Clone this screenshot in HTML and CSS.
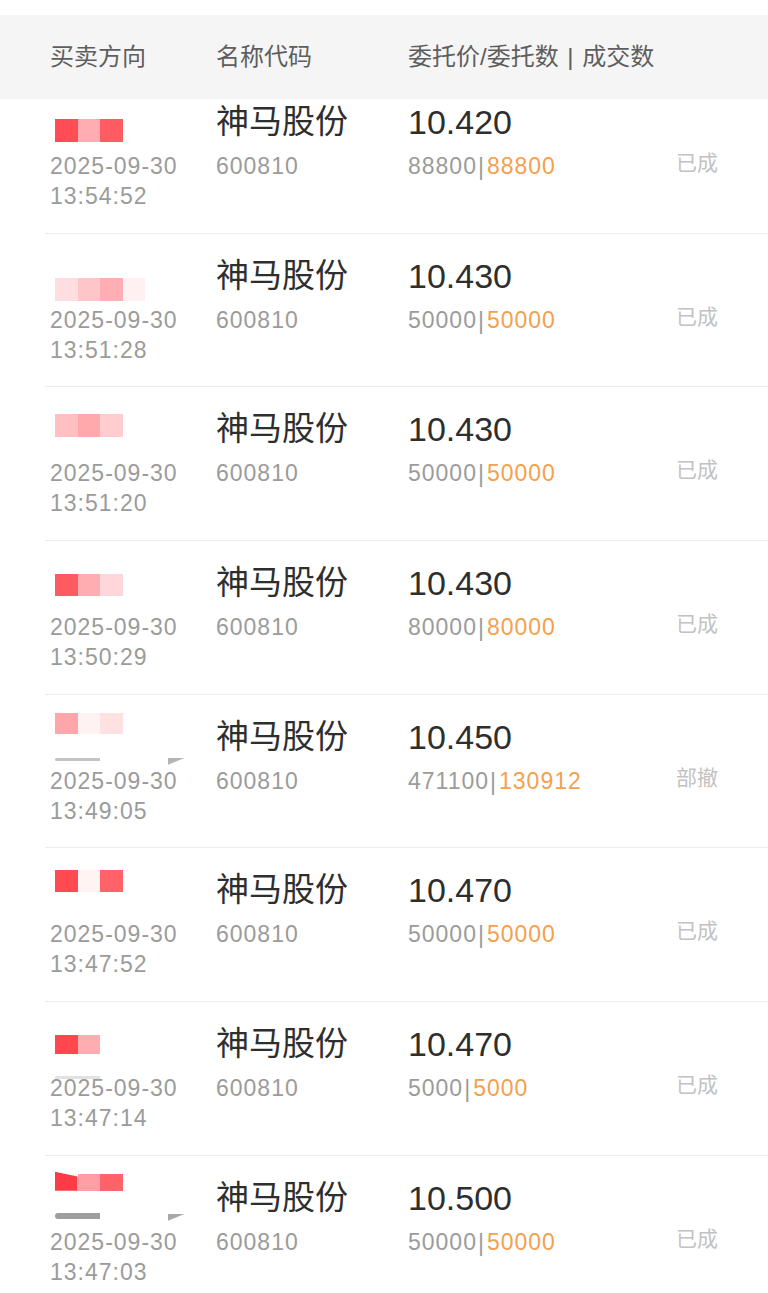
FILE: index.html
```html
<!DOCTYPE html>
<html lang="zh-CN">
<head>
<meta charset="utf-8">
<title>委托记录</title>
<link rel="stylesheet" href="styles.css">
</head>
<body>
<div class="page">
  <div class="topgap"></div>
  <div class="header">
    <div class="h c1">买卖方向</div>
    <div class="h c2">名称代码</div>
    <div class="h c3">委托价/委托数 | 成交数</div>
  </div>
  <div class="list">
    <div class="inner">

      <div class="row first">
        <div class="col1">
          <div class="mosaic m1"><i class="r1"></i><i class="r2"></i><i class="r3"></i></div>
          <div class="date">2025-09-30</div>
          <div class="time">13:54:52</div>
        </div>
        <div class="col2"><div class="name">神马股份</div><div class="code">600810</div></div>
        <div class="col3"><div class="price">10.420</div><div class="qty"><span class="q">88800</span><span class="bar">|</span><span class="d">88800</span></div></div>
        <div class="col4">已成</div>
      </div>

      <div class="row">
        <div class="col1">
          <div class="mosaic m2"><i class="p1"></i><i class="p2"></i><i class="p3"></i><i class="p4"></i></div>
          <div class="date">2025-09-30</div>
          <div class="time">13:51:28</div>
        </div>
        <div class="col2"><div class="name">神马股份</div><div class="code">600810</div></div>
        <div class="col3"><div class="price">10.430</div><div class="qty"><span class="q">50000</span><span class="bar">|</span><span class="d">50000</span></div></div>
        <div class="col4">已成</div>
      </div>

      <div class="row">
        <div class="col1">
          <div class="mosaic m3"><i class="s1"></i><i class="s2"></i><i class="s3"></i></div>
          <div class="date">2025-09-30</div>
          <div class="time">13:51:20</div>
        </div>
        <div class="col2"><div class="name">神马股份</div><div class="code">600810</div></div>
        <div class="col3"><div class="price">10.430</div><div class="qty"><span class="q">50000</span><span class="bar">|</span><span class="d">50000</span></div></div>
        <div class="col4">已成</div>
      </div>

      <div class="row">
        <div class="col1">
          <div class="mosaic m4"><i class="t1"></i><i class="t2"></i><i class="t3"></i></div>
          <div class="date">2025-09-30</div>
          <div class="time">13:50:29</div>
        </div>
        <div class="col2"><div class="name">神马股份</div><div class="code">600810</div></div>
        <div class="col3"><div class="price">10.430</div><div class="qty"><span class="q">80000</span><span class="bar">|</span><span class="d">80000</span></div></div>
        <div class="col4">已成</div>
      </div>

      <div class="row">
        <div class="col1">
          <div class="mosaic m5"><i class="u1"></i><i class="u2"></i><i class="u3"></i></div>
          <div class="smear s5a"></div>
          <div class="wedge w5"></div>
          <div class="date">2025-09-30</div>
          <div class="time">13:49:05</div>
        </div>
        <div class="col2"><div class="name">神马股份</div><div class="code">600810</div></div>
        <div class="col3"><div class="price">10.450</div><div class="qty"><span class="q">471100</span><span class="bar">|</span><span class="d">130912</span></div></div>
        <div class="col4">部撤</div>
      </div>

      <div class="row">
        <div class="col1">
          <div class="mosaic m6"><i class="v1"></i><i class="v2"></i><i class="v3"></i></div>
          <div class="date">2025-09-30</div>
          <div class="time">13:47:52</div>
        </div>
        <div class="col2"><div class="name">神马股份</div><div class="code">600810</div></div>
        <div class="col3"><div class="price">10.470</div><div class="qty"><span class="q">50000</span><span class="bar">|</span><span class="d">50000</span></div></div>
        <div class="col4">已成</div>
      </div>

      <div class="row">
        <div class="col1">
          <div class="mosaic m7"><i class="x1"></i><i class="x2"></i></div>
          <div class="smear s7a"></div>
          <div class="date">2025-09-30</div>
          <div class="time">13:47:14</div>
        </div>
        <div class="col2"><div class="name">神马股份</div><div class="code">600810</div></div>
        <div class="col3"><div class="price">10.470</div><div class="qty"><span class="q">5000</span><span class="bar">|</span><span class="d">5000</span></div></div>
        <div class="col4">已成</div>
      </div>

      <div class="row last">
        <div class="col1">
          <div class="mosaic m8"><i class="y1"></i><i class="y2"></i><i class="y3"></i></div>
          <div class="smear s8a"></div>
          <div class="wedge w8"></div>
          <div class="date">2025-09-30</div>
          <div class="time">13:47:03</div>
        </div>
        <div class="col2"><div class="name">神马股份</div><div class="code">600810</div></div>
        <div class="col3"><div class="price">10.500</div><div class="qty"><span class="q">50000</span><span class="bar">|</span><span class="d">50000</span></div></div>
        <div class="col4">已成</div>
      </div>

    </div>
  </div>
</div>
</body>
</html>
```
FILE: styles.css
```css
html, body {
  margin: 0;
  padding: 0;
  background: #ffffff;
}
body {
  font-family: "Liberation Sans", "Noto Sans CJK SC", sans-serif;
  width: 768px;
  height: 1293px;
  overflow: hidden;
}
.page {
  display: flex;
  flex-direction: column;
  height: 1293px;
}
.topgap {
  height: 15px;
  background: #ffffff;
  flex: none;
}
.header {
  flex: none;
  height: 84px;
  background: #f5f5f5;
  display: grid;
  grid-template-columns: 166px 192px 1fr;
  align-items: center;
  padding-left: 50px;
  color: #5e5e5e;
  font-size: 24px;
}
.h {
  line-height: 32px;
  white-space: nowrap;
}
.c3 {
  word-spacing: 2px;
}
.list {
  flex: 1;
  overflow: hidden;
  position: relative;
}
.inner {
  margin-top: -20px;
}
.row {
  margin-left: 45px;
  padding-left: 5px;
  height: 153.7px;
  box-sizing: border-box;
  border-top: 1px solid #ececec;
  display: grid;
  grid-template-columns: 166px 192px 268px 1fr;
}
.row.first {
  border-top: 1px solid transparent;
}
.col1 {
  position: relative;
  padding-top: 71px;
}
.date, .time, .code, .qty {
  font-size: 23px;
  line-height: 30px;
  letter-spacing: 1px;
  color: #9b9b9b;
  white-space: nowrap;
}
.col2, .col3 {
  padding-top: 20px;
}
.name {
  font-size: 33px;
  line-height: 44px;
  color: #2e2e2e;
  margin-bottom: 7px;
  white-space: nowrap;
}
.price {
  font-size: 34px;
  line-height: 44px;
  color: #2e2e2e;
  margin-bottom: 7px;
  white-space: nowrap;
}
.qty .bar {
  color: #9b9b9b;
  margin: 0 3px 0 1px;
  letter-spacing: 0;
  position: relative;
  top: 1px;
}
.qty .d {
  color: #f5a04c;
}
.col4 {
  padding-top: 68px;
  font-size: 21px;
  line-height: 30px;
  color: #c2c2c2;
  white-space: nowrap;
}

/* censored mosaic blocks that cover the direction label */
.mosaic {
  position: absolute;
  left: 5px;
  display: flex;
  height: 23px;
}
.mosaic i {
  display: block;
  width: 22.5px;
  height: 100%;
}
.m1 { top: 39px; }
.m1 .r1 { background: #ff4c55; }
.m1 .r2 { background: #ffadb2; }
.m1 .r3 { background: #ff5b62; }

.m2 { top: 44px; }
.m2 .p1 { background: #ffdde0; }
.m2 .p2 { background: #ffc6c9; }
.m2 .p3 { background: #ffafb3; }
.m2 .p4 { background: #fff0f1; }

.m3 { top: 27px; }
.m3 .s1 { background: #ffbfc3; }
.m3 .s2 { background: #ffa9ad; }
.m3 .s3 { background: #ffccd0; }

.m4 { top: 33px; height: 22px; }
.m4 .t1 { background: #ff5a61; }
.m4 .t2 { background: #ffadb1; }
.m4 .t3 { background: #ffd6d9; }

.m5 { top: 18px; height: 21px; }
.m5 .u1 { background: #ffa6ab; }
.m5 .u2 { background: #fff2f3; }
.m5 .u3 { background: #ffe1e3; }

.m6 { top: 22px; height: 22px; }
.m6 .v1 { background: #ff4a51; }
.m6 .v2 { background: #fff3f3; }
.m6 .v3 { background: #ff6268; }

.m7 { top: 33px; height: 19px; }
.m7 .x1 { background: #ff484e; }
.m7 .x2 { background: #ffadb1; }

.m8 { top: 16px; height: 19px; }
.m8 .y1 { background: #ff3c45; clip-path: polygon(0 0, 100% 25%, 100% 100%, 0 100%); }
.m8 .y2 { background: #ff9ea4; height: 17px; margin-top: 2px; }
.m8 .y3 { background: #ff6269; height: 17px; margin-top: 2px; }

.smear {
  position: absolute;
  left: 5px;
  width: 45px;
  border-radius: 3px 0 0 3px;
}
.s5a { top: 63px; height: 3px; background: #c4c4c4; }
.s7a { top: 74px; height: 3px; background: #e2e2e2; }
.s8a { top: 57px; height: 6px; background: #9e9e9e; }
.wedge {
  position: absolute;
  left: 118px;
  width: 17px;
  height: 7px;
  background: #b4b4b4;
  clip-path: polygon(0 0, 100% 0, 0 100%);
  border-radius: 0 0 6px 0;
}
.w5 { top: 63px; }
.w8 { top: 58px; background: #a8a8a8; }
```
